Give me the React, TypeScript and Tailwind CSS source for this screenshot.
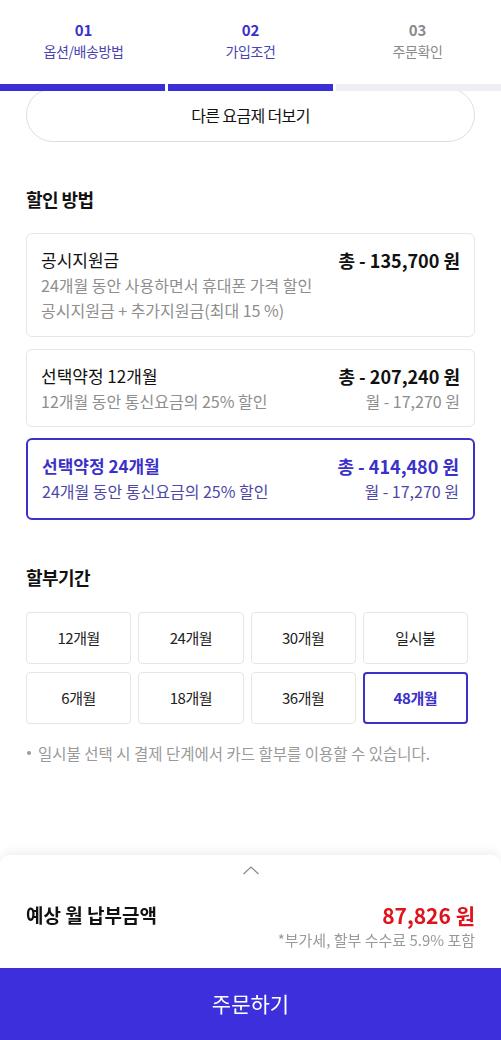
import React, { useState } from 'react';

const font = { fontFamily: '"Noto Sans CJK KR", "Noto Sans", sans-serif' };

const steps = [
  { no: '01', label: '옵션/배송방법' },
  { no: '02', label: '가입조건' },
  { no: '03', label: '주문확인' },
];

const discounts = [
  { title: '공시지원금', total: '총 - 135,700 원', lines: ['24개월 동안 사용하면서 휴대폰 가격 할인', '공시지원금 + 추가지원금(최대 15 %)'], monthly: '' },
  { title: '선택약정 12개월', total: '총 - 207,240 원', lines: ['12개월 동안 통신요금의 25% 할인'], monthly: '월 - 17,270 원' },
  { title: '선택약정 24개월', total: '총 - 414,480 원', lines: ['24개월 동안 통신요금의 25% 할인'], monthly: '월 - 17,270 원' },
];

const periods = ['12개월', '24개월', '30개월', '일시불', '6개월', '18개월', '36개월', '48개월'];

const App: React.FC = () => {
  const [discount, setDiscount] = useState(2);
  const [period, setPeriod] = useState('48개월');

  return (
    <div className="min-h-screen bg-white text-[#111] pb-[200px]" style={font}>
      {/* 단계 헤더 */}
      <div className="relative z-10 bg-white">
        <div className="grid grid-cols-3 h-[84px] pt-[19px]">
          {steps.map((s, i) => (
            <div key={s.no} className="flex flex-col items-center">
              <span className={`text-[15px] font-bold leading-[22px] ${i < 2 ? 'text-[#3b30c9]' : 'text-[#8a8a8a]'}`}>{s.no}</span>
              <span className={`text-[14px] leading-[20px] tracking-[-0.03em] ${i < 2 ? 'text-[#4a44ae]' : 'text-[#8a8a8a]'}`}>{s.label}</span>
            </div>
          ))}
        </div>
        <div className="flex gap-[3px] h-[7px]">
          <div className="flex-1 bg-[#3a2fd6]" />
          <div className="flex-1 bg-[#3a2fd6]" />
          <div className="flex-1 bg-[#eeeef3]" />
        </div>
      </div>

      <div className="px-[26px]">
        <button className="-mt-[3px] w-full h-[54px] rounded-full border border-[#dedede] text-[16px] tracking-[-0.04em] text-[#111]">
          다른 요금제 더보기
        </button>

        <h2 className="mt-[44px] text-[18px] font-bold leading-[26px] tracking-[-0.03em]">할인 방법</h2>

        <div className="mt-[21px]">
          {discounts.map((d, i) => {
            const on = discount === i;
            return (
              <div
                key={d.title}
                onClick={() => setDiscount(i)}
                className={`rounded-[6px] px-[14px] ${i === 1 ? 'mt-[12px]' : ''} ${i === 2 ? 'mt-[11px]' : ''} ${on ? 'border-2 border-[#3b30c9] pt-[13px] pb-[14px]' : 'border border-[#e6e6e6] pt-[13px]'} ${!on && i === 0 ? 'pb-[13px]' : ''} ${!on && i > 0 ? 'pb-[12px]' : ''}`}
              >
                <div className="flex justify-between items-center leading-[26px]">
                  <span className={on ? 'text-[17px] font-bold text-[#3b30c9]' : 'text-[17px] text-[#111]'}>{d.title}</span>
                  <span className={`text-[18px] font-bold ${on ? 'text-[#3b30c9]' : 'text-[#111]'}`}>{d.total}</span>
                </div>
                {d.lines.map((l, j) => (
                  <div key={l} className="flex justify-between items-center leading-[25px]">
                    <span className={`text-[16px] ${on ? 'text-[#4e48a8]' : 'text-[#8e8e8e]'}`}>{l}</span>
                    {j === 0 && d.monthly && (
                      <span className={`text-[16px] ${on ? 'text-[#4e48a8]' : 'text-[#8e8e8e]'}`}>{d.monthly}</span>
                    )}
                  </div>
                ))}
              </div>
            );
          })}
        </div>

        <h2 className="mt-[44px] text-[18px] font-bold leading-[26px] tracking-[-0.03em]">할부기간</h2>

        <div className="mt-[22px] grid grid-cols-4 gap-x-[7px] gap-y-[8px] w-[442px]">
          {periods.map(p => {
            const on = period === p;
            return (
              <button
                key={p}
                onClick={() => setPeriod(p)}
                className={`h-[52px] rounded-[4px] text-[15px] tracking-[-0.03em] ${on ? 'border-2 border-[#3b30c9] text-[#3b30c9] font-bold' : 'border border-[#e6e6e6] text-[#222]'}`}
              >
                {p}
              </button>
            );
          })}
        </div>

        <p className="mt-[19px] flex items-center text-[15.5px] leading-[20px] text-[#9a9a9a]">
          <span className="w-[4px] h-[4px] rounded-full bg-[#9a9a9a] ml-[1px] mr-[7px]" />
          일시불 선택 시 결제 단계에서 카드 할부를 이용할 수 있습니다.
        </p>
      </div>

      {/* 하단 요약 시트 */}
      <div className="fixed bottom-0 inset-x-0 z-20 bg-white rounded-t-[10px] shadow-[0_-4px_10px_rgba(0,0,0,0.06)]">
        <div className="flex justify-center pt-[10px] h-[30px]">
          <svg width="18" height="10" viewBox="0 0 18 10" fill="none" stroke="#8a8a8a" strokeWidth="1.2">
            <path d="M1.5 9 L9 2 L16.5 9" />
          </svg>
        </div>
        <div className="px-[26px] pt-[16px] h-[83px]">
          <div className="flex justify-between items-center leading-[28px]">
            <span className="text-[19px] font-bold">예상 월 납부금액</span>
            <span className="text-[21px] font-bold text-[#e0121c]">87,826 원</span>
          </div>
          <div className="text-right text-[15px] leading-[22px] text-[#9a9a9a]">*부가세, 할부 수수료 5.9% 포함</div>
        </div>
        <button className="w-full h-[72px] bg-[#3d2fdc] text-white text-[21px]">주문하기</button>
      </div>
    </div>
  );
};

export default App;
